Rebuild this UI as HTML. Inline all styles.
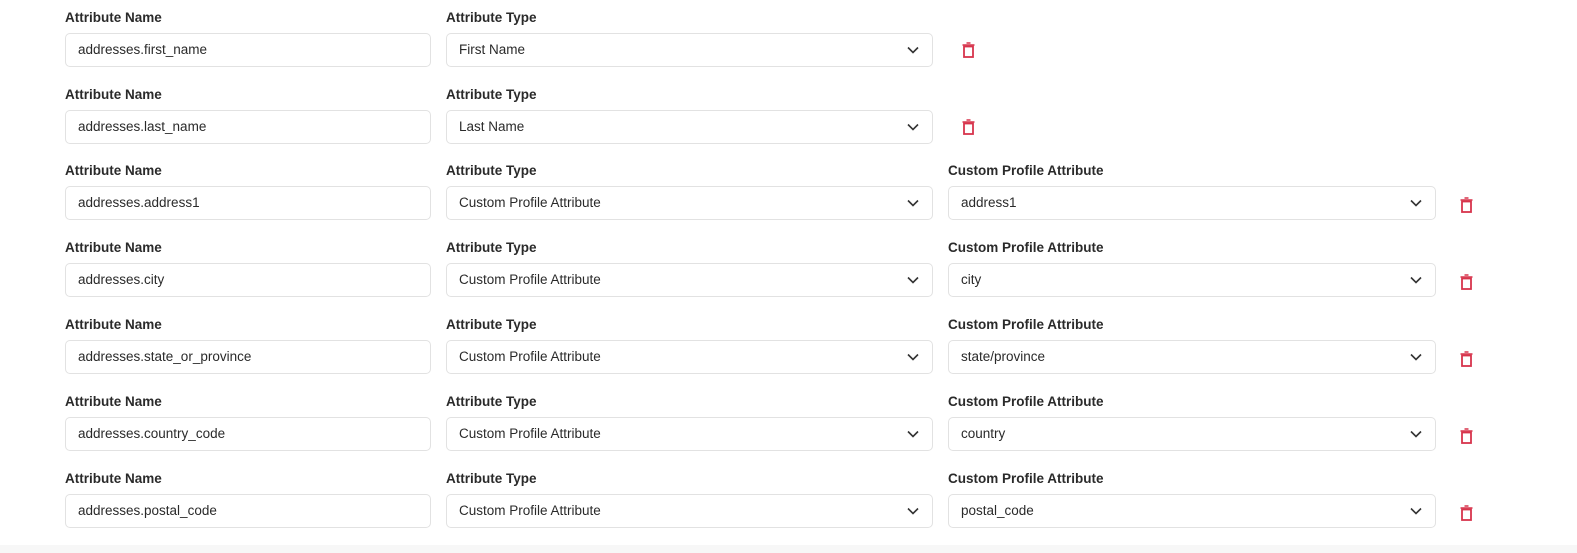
<!DOCTYPE html>
<html><head><style>
body{margin:0;width:1577px;height:553px;background:#fff;font-family:"Liberation Sans",sans-serif;position:relative;overflow:hidden;}
.bot{position:absolute;left:0;top:545px;width:1577px;height:8px;background:#f7f7f7;}
.lbl{position:absolute;font-size:13.5px;font-weight:bold;color:#2a2a2a;}
.box{position:absolute;height:34px;border:1px solid #e2e2e2;border-radius:5px;box-sizing:border-box;font-size:13.5px;color:#2a2a2a;line-height:32px;padding-left:12px;}
.box svg{position:absolute;right:13px;top:12px;}
.del{position:absolute;}
</style></head><body>
<div id="c"></div>
<div class="bot"></div>
<script>
var rows=[["addresses.first_name","First Name",null],["addresses.last_name","Last Name",null],["addresses.address1","Custom Profile Attribute","address1"],["addresses.city","Custom Profile Attribute","city"],["addresses.state_or_province","Custom Profile Attribute","state/province"],["addresses.country_code","Custom Profile Attribute","country"],["addresses.postal_code","Custom Profile Attribute","postal_code"]];
var ys=[10,87,163,240,317,394,471];
var chev='<svg width="12" height="8" viewBox="0 0 12 8"><path d="M1 1.5L6 6.5L11 1.5" fill="none" stroke="#333" stroke-width="1.6"/></svg>';
var trash='<svg width="13" height="16" viewBox="0 0 13 16"><path d="M4.5 1H8.5M0.5 3H12.5" stroke="#d7344c" stroke-width="1.6" fill="none"/><rect x="2" y="4.5" width="9" height="10.5" fill="none" stroke="#d7344c" stroke-width="1.8"/></svg>';
var h='';
rows.forEach(function(r,i){var y=ys[i];
h+='<div class="lbl" style="left:65px;top:'+y+'px">Attribute Name</div>';
h+='<div class="lbl" style="left:446px;top:'+y+'px">Attribute Type</div>';
h+='<div class="box" style="left:65px;top:'+(y+23)+'px;width:366px">'+r[0]+'</div>';
h+='<div class="box" style="left:446px;top:'+(y+23)+'px;width:487px">'+r[1]+chev+'</div>';
if(r[2]){h+='<div class="lbl" style="left:948px;top:'+y+'px">Custom Profile Attribute</div>';
h+='<div class="box" style="left:948px;top:'+(y+23)+'px;width:488px">'+r[2]+chev+'</div>';
h+='<div class="del" style="left:1460px;top:'+(y+34)+'px">'+trash+'</div>';}
else h+='<div class="del" style="left:962px;top:'+(y+32)+'px">'+trash+'</div>';
});
document.getElementById('c').innerHTML=h;
</script>
</body></html>
